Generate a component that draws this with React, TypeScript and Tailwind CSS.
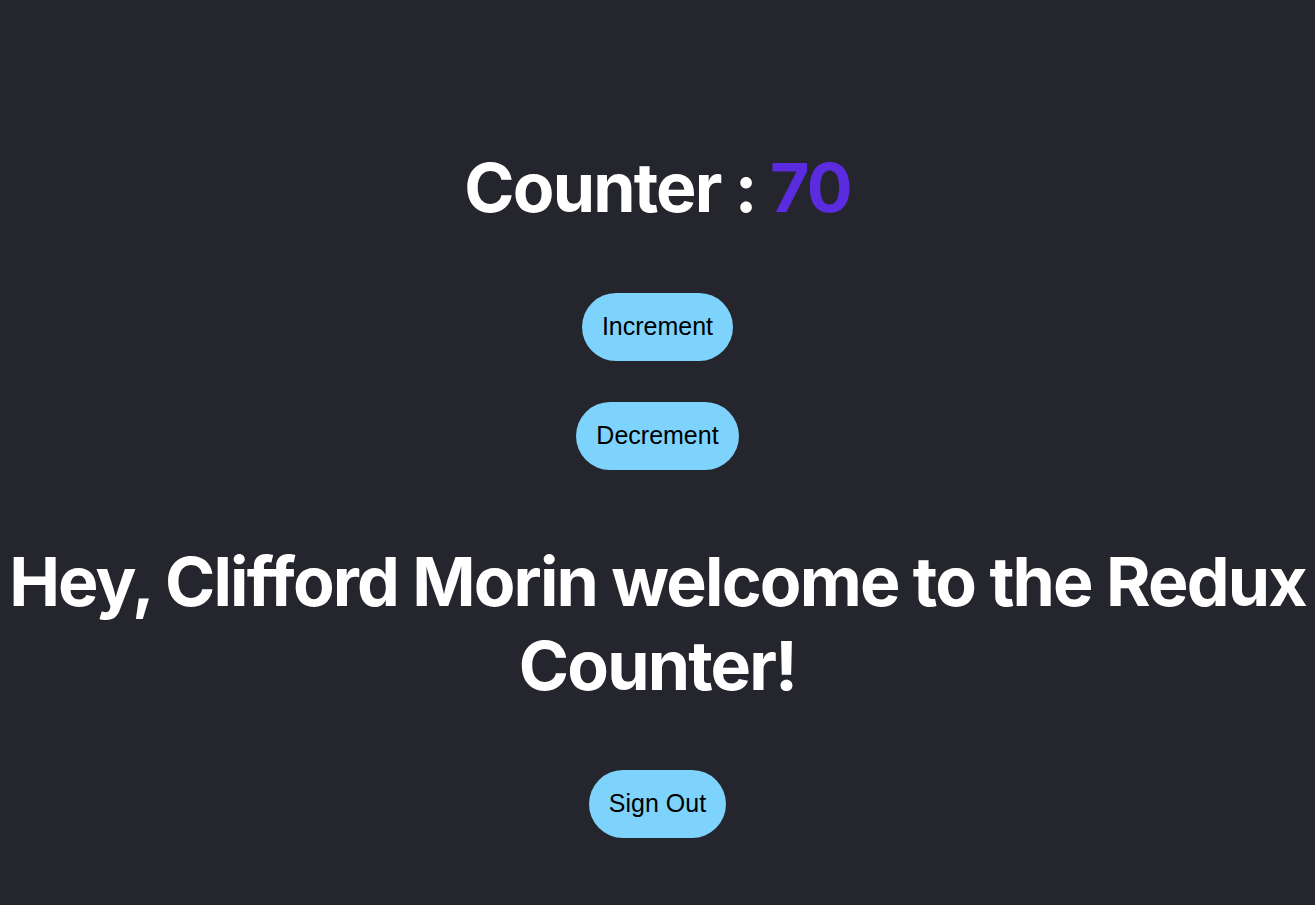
export default function App() {
  const btn =
    "h-[68px] rounded-full bg-[#7dd3fc] px-5 text-[25px] text-black font-['Liberation_Sans',Arial,sans-serif]";
  return (
    <div className="min-h-[905px] w-full bg-[#25262d] flex flex-col items-center pt-[146px] font-['Inter',sans-serif] text-white">
      <h1 className="text-[68px] leading-[82px] font-bold tracking-[-0.027em]">
        Counter : <span className="text-[#5b2be0]">70</span>
      </h1>
      <button className={`${btn} mt-[65px]`}>Increment</button>
      <button className={`${btn} mt-[41px]`}>Decrement</button>
      <h1 className="mt-[69px] text-center text-[68px] leading-[84px] font-bold tracking-[-0.027em]">
        Hey, Clifford Morin welcome to the Redux Counter!
      </h1>
      <button className={`${btn} mt-[63px]`}>Sign Out</button>
    </div>
  );
}
